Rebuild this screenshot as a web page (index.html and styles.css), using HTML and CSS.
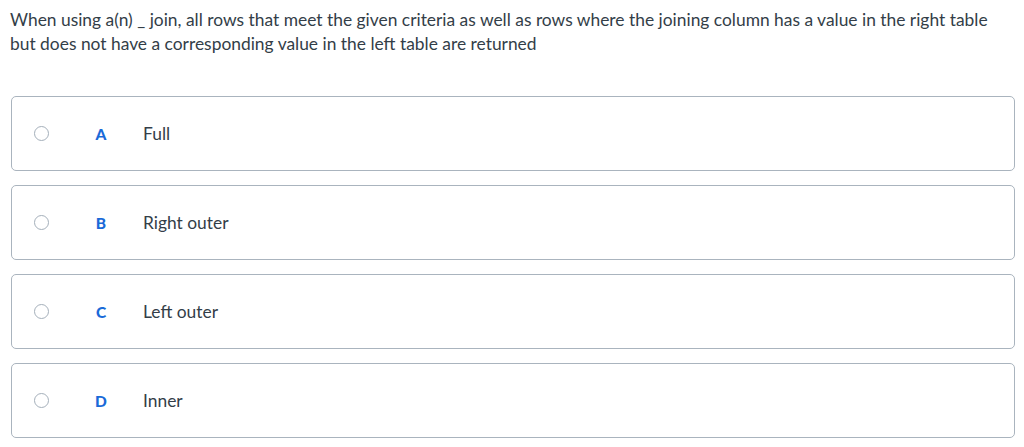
FILE: index.html
```html
<!DOCTYPE html>
<html>
<head>
<meta charset="utf-8">
<link rel="stylesheet" href="styles.css">
</head>
<body>
<div class="question">When using a(n) _ join, all rows that meet the given criteria as well as rows where the joining column has a value in the right table but does not have a corresponding value in the left table are returned</div>
<div class="options">
  <div class="option"><span class="radio"></span><span class="letter">A</span><span class="label">Full</span></div>
  <div class="option"><span class="radio"></span><span class="letter">B</span><span class="label">Right outer</span></div>
  <div class="option"><span class="radio"></span><span class="letter">C</span><span class="label">Left outer</span></div>
  <div class="option"><span class="radio"></span><span class="letter">D</span><span class="label">Inner</span></div>
</div>
</body>
</html>
```
FILE: styles.css
```css
html, body { margin: 0; padding: 0; background: #fff; }
body {
  font-family: "Lato", "Open Sans", sans-serif;
  color: #333e48;
  padding: 8px 9px 0 10px;
}
.question {
  font-size: 17.4px;
  line-height: 24px;
  width: 1000px;
}
.options {
  margin-top: 40px;
  display: flex;
  flex-direction: column;
  gap: 14px;
}
.option {
  margin-left: 1px;
  height: 73px;
  border: 1px solid #aab4be;
  border-radius: 5px;
  display: flex;
  align-items: center;
}
.radio {
  width: 13px;
  height: 13px;
  border: 1px solid #a4afba;
  border-radius: 50%;
  margin-left: 22px;
  flex: none;
}
.letter {
  width: 14px;
  margin-left: 45px;
  text-align: center;
  font-size: 15.5px;
  font-weight: 900;
  color: #1a6ad8;
}
.label {
  margin-left: 35px;
  font-size: 17.4px;
}
```
